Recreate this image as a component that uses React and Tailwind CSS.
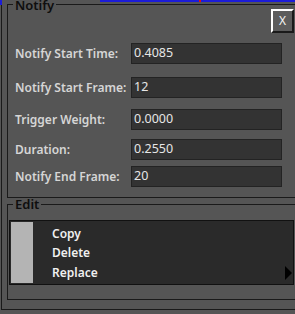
import React from "react";

const rows = [
  { label: "Notify Start Time:", value: "0.4085", mt: "mt-[10px]" },
  { label: "Notify Start Frame:", value: "12", mt: "mt-[13px]" },
  { label: "Trigger Weight:", value: "0.0000", mt: "mt-[11px]" },
  { label: "Duration:", value: "0.2550", mt: "mt-[9px]" },
  { label: "Notify End Frame:", value: "20", mt: "mt-[6px]" },
];

export default function App() {
  return (
    <div
      className="relative w-[295px] h-[314px] overflow-hidden bg-[#555555] pt-[5px] pl-[1px]"
      style={{ fontFamily: '"Noto Sans", "Open Sans", sans-serif' }}
    >
      {/* window highlight decorations */}
      <div className="absolute left-[100px] right-0 top-0 h-[2px] bg-[#1c1cd8]" />
      <div className="absolute left-0 top-0 w-[2px] h-[5px] bg-[#1c1cd8]" />
      <div className="absolute left-[199px] top-0 w-[2px] h-[2px] bg-[#e01010]" />

      <div className="w-[320px] h-[306px] border-l border-b border-[#1a1a1a] pl-[5px]">
        {/* Notify group */}
        <div className="relative -mt-px w-[300px] h-[194px] border border-[#1a1a1a]">
          <span className="absolute left-[5px] -top-[5px] px-[2px] bg-[#555555] text-[13px] leading-[10px] font-semibold text-[#0e0e0e]">
            Notify
          </span>
          <div className="ml-[263px] mt-[4px] w-[23px] h-[24px] border-2 border-t-white border-l-white border-r-[#1a1a1a] border-b-[#1a1a1a] bg-[#5c5c5c] flex items-center justify-center text-[12px] text-[#f4f4f4]">
            X
          </div>
          {rows.map((r) => (
            <div key={r.label} className={`${r.mt} flex items-center h-[21px] pl-[7px]`}>
              <div className="w-[116px] text-[12px] font-semibold text-[#d6d6d6] whitespace-nowrap">
                {r.label}
              </div>
              <div className="w-[151px] h-[21px] bg-[#333333] border border-[#232323] flex items-center pl-[2px] text-[12.5px] text-[#e6e6e6]">
                {r.value}
              </div>
            </div>
          ))}
        </div>

        {/* Edit group */}
        <div className="relative mt-[6px] w-[300px] h-[96px] border border-[#1a1a1a]">
          <span className="absolute left-[5px] -top-[6px] px-[2px] bg-[#555555] text-[13px] leading-[10px] font-semibold text-[#0e0e0e]">
            Edit
          </span>
          <div className="ml-[1px] mt-[15px] w-[285px] h-[65px] border border-[#111111] bg-[#2a2a2a] flex p-[1px] overflow-hidden">
            <div className="w-[22px] h-full bg-[#b4b4b4]" />
            <div className="flex-1 pt-[2px]">
              {["Copy", "Delete", "Replace"].map((t) => (
                <div key={t} className="h-[19.5px] flex items-center justify-between pl-[19px] text-[12px] font-semibold text-[#f0f0f0]">
                  <span>{t}</span>
                  {t === "Replace" && (
                    <svg width="7" height="14" viewBox="0 0 7 14">
                      <polygon points="0,0 7,7 0,14" fill="#000" />
                    </svg>
                  )}
                </div>
              ))}
            </div>
          </div>
        </div>
      </div>
    </div>
  );
}
